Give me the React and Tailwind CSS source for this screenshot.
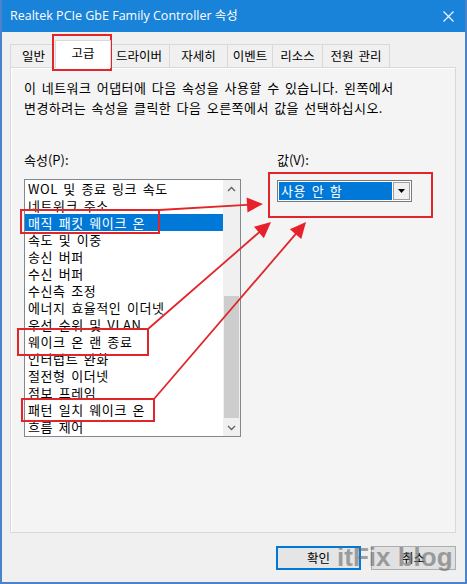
import React from "react";

const KR = { fontFamily: '"Noto Sans CJK KR", "Noto Sans", sans-serif' };

const tabs = [
  { label: "일반", w: 47 },
  { label: "고급", w: 56, active: true },
  { label: "드라이버", w: 61 },
  { label: "자세히", w: 58 },
  { label: "이벤트", w: 45 },
  { label: "리소스", w: 50 },
  { label: "전원 관리", w: 67 },
];

const items = [
  "WOL 및 종료 링크 속도",
  "네트워크 주소",
  "매직 패킷 웨이크 온",
  "속도 및 이중",
  "송신 버퍼",
  "수신 버퍼",
  "수신측 조정",
  "에너지 효율적인 이더넷",
  "우선 순위 및 VLAN",
  "웨이크 온 랜 종료",
  "인터럽트 완화",
  "절전형 이더넷",
  "점보 프레임",
  "패턴 일치 웨이크 온",
  "흐름 제어",
];

// red annotation boxes and arrows
const boxes = [
  [53, 35, 58, 35],
  [21, 210, 138, 23],
  [18, 329, 130, 26],
  [22, 399, 132, 22],
  [269, 173, 163, 44],
];

const arrows = [
  [159, 210, 263, 204],
  [148, 329, 271, 222],
  [154, 399, 306, 222],
];

function head(sx, sy, tx, ty) {
  const dx = tx - sx;
  const dy = ty - sy;
  const len = Math.sqrt(dx * dx + dy * dy);
  const ux = dx / len;
  const uy = dy / len;
  const bx = tx - ux * 16;
  const by = ty - uy * 16;
  return `${tx},${ty} ${bx - uy * 7.5},${by + ux * 7.5} ${bx + uy * 7.5},${by - ux * 7.5}`;
}

const Annotations = () => (
  <svg
    className="pointer-events-none absolute left-0 top-0"
    width="467"
    height="584"
  >
    {boxes.map(([x, y, w, h], i) => (
      <rect
        key={i}
        x={x}
        y={y}
        width={w}
        height={h}
        fill="none"
        stroke="#e0252b"
        strokeWidth="2"
      />
    ))}
    {arrows.map(([sx, sy, tx, ty], i) => {
      const dx = tx - sx;
      const dy = ty - sy;
      const len = Math.sqrt(dx * dx + dy * dy);
      return (
        <g key={i}>
          <line
            x1={sx}
            y1={sy}
            x2={tx - (dx / len) * 12}
            y2={ty - (dy / len) * 12}
            stroke="#e0252b"
            strokeWidth="1.8"
          />
          <polygon points={head(sx, sy, tx, ty)} fill="#e8202a" />
        </g>
      );
    })}
  </svg>
);

const App = () => {
  return (
    <div className="relative h-[584px] w-[467px] overflow-hidden">
      <div className="flex h-full w-full flex-col border-2 border-t-0 border-[#4a82cc] bg-[#f0f0f0]">
        {/* Title bar */}
        <div className="flex h-[32px] shrink-0 items-center justify-between bg-[#1883d8] pl-[8px] pr-[11px]">
          <span
            className="text-[12.5px] text-white"
            style={{ fontFamily: '"Open Sans", "Noto Sans CJK KR", sans-serif' }}
          >
            Realtek PCIe GbE Family Controller 속성
          </span>
          <svg width="11" height="11" viewBox="0 0 11 11">
            <path d="M0.5 0.5 L10.5 10.5 M10.5 0.5 L0.5 10.5" stroke="#fff" strokeWidth="1.1" />
          </svg>
        </div>

        <div
          className="flex flex-1 flex-col pl-[8px] pr-[9px] pt-[8px] [word-spacing:2px]"
          style={KR}
        >
          {/* Tabs */}
          <div className="flex h-[27px] items-end">
            {tabs.map((t, i) =>
              t.active ? (
                <div
                  key={t.label}
                  style={{ width: t.w }}
                  className="relative z-10 -mx-[2px] -mb-px flex h-[28px] items-center justify-center border border-b-0 border-[#d9d9d9] bg-white pb-[2px] text-[12.5px] text-black"
                >
                  {t.label}
                </div>
              ) : (
                <div
                  key={t.label}
                  style={{ width: t.w }}
                  className={`flex h-[23px] items-center justify-center border-t border-r border-[#d9d9d9] bg-[#f0f0f0] text-[12.5px] text-black ${
                    i === 0 ? "border-l" : ""
                  }`}
                >
                  {t.label}
                </div>
              )
            )}
          </div>

          {/* Panel */}
          <div className="h-[466px] border border-[#d9d9d9] bg-[#f4f4f4] px-[13px] pt-[10px] shadow-[inset_1px_1px_0_#fff]">
            <p className="whitespace-nowrap text-[13px] leading-[20px] tracking-[0.45px] text-black">
              이 네트워크 어댑터에 다음 속성을 사용할 수 있습니다. 왼쪽에서
              <br />
              변경하려는 속성을 클릭한 다음 오른쪽에서 값을 선택하십시오.
            </p>

            <div className="mt-[33px] flex">
              {/* Property list */}
              <div className="w-[217px]">
                <div className="text-[13px] leading-[18px]">속성(P):</div>
                <div className="mt-[10px] flex h-[258px] border border-[#828790] bg-white">
                  <div className="flex-1 overflow-hidden">
                    {items.map((it) => (
                      <div
                        key={it}
                        className={`h-[17px] whitespace-nowrap pl-[3px] text-[13px] leading-[17px] tracking-[0.6px] ${
                          it === "매직 패킷 웨이크 온"
                            ? "bg-[#0078d7] text-white"
                            : "text-black"
                        }`}
                      >
                        {it}
                      </div>
                    ))}
                  </div>
                  <div className="flex w-[17px] flex-col bg-[#f0f0f0]">
                    <div className="flex h-[17px] items-center justify-center">
                      <svg width="9" height="6" viewBox="0 0 9 6">
                        <path d="M1 5 L4.5 1.5 L8 5" fill="none" stroke="#606060" strokeWidth="1.3" />
                      </svg>
                    </div>
                    <div className="flex-1 px-px">
                      <div className="mt-[99px] h-[122px] bg-[#cdcdcd]" />
                    </div>
                    <div className="flex h-[17px] items-center justify-center">
                      <svg width="9" height="6" viewBox="0 0 9 6">
                        <path d="M1 1 L4.5 4.5 L8 1" fill="none" stroke="#606060" strokeWidth="1.3" />
                      </svg>
                    </div>
                  </div>
                </div>
              </div>

              {/* Value */}
              <div className="ml-[36px]">
                <div className="text-[13px] leading-[18px]">값(V):</div>
                <div className="mt-[11px] flex h-[22px] w-[135px] border border-[#7a7a7a] bg-white p-px">
                  <div className="flex flex-1 items-center bg-[#0078d7] pl-[2px] text-[13px] tracking-[0.6px] text-white">
                    사용 안 함
                  </div>
                  <div className="ml-px flex w-[17px] items-center justify-center border border-[#a0a0a0] bg-[#f0f0f0]">
                    <svg width="7" height="4" viewBox="0 0 7 4">
                      <path d="M0 0 L7 0 L3.5 4 Z" fill="#000" />
                    </svg>
                  </div>
                </div>
              </div>
            </div>
          </div>

          {/* Buttons */}
          <div className="mt-[13px] flex justify-end gap-[10px]">
            <button className="h-[24px] w-[85px] border-2 border-[#0078d7] bg-[#e5e5e5] text-[12.5px] text-black">
              확인
            </button>
            <button className="h-[24px] w-[85px] border border-[#adadad] bg-[#e1e1e1] text-[12.5px] text-black">
              취소
            </button>
          </div>
        </div>
      </div>

      <Annotations />

      {/* watermark */}
      <div
        className="pointer-events-none absolute left-[337px] top-[544px] text-[26px] font-bold leading-[26px] text-[rgba(105,105,105,0.6)]"
        style={{ fontFamily: '"Liberation Sans", Arial, sans-serif' }}
      >
        itFix blog
      </div>
    </div>
  );
};

export default App;
